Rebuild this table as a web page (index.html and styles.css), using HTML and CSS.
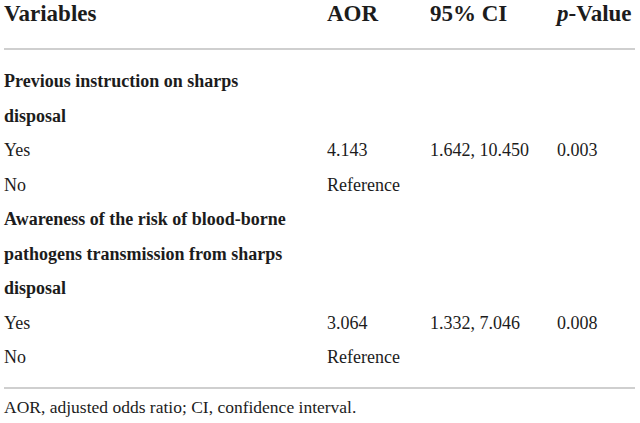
FILE: index.html
```html
<!DOCTYPE html>
<html lang="en">
<head>
    <meta charset="UTF-8">
    <title>Multivariable analysis</title>
    <link rel="stylesheet" href="styles.css">
</head>
<body>

    <table class="results">
        <thead>
            <tr>
                <th class="col-var">Variables</th>
                <th class="col-aor">AOR</th>
                <th class="col-ci">95% CI</th>
                <th class="col-p"><i>p</i>-Value</th>
            </tr>
        </thead>
        <tbody>
            <tr class="first">
                <td class="group">Previous instruction on sharps<br>disposal</td>
                <td></td><td></td><td></td>
            </tr>
            <tr>
                <td>Yes</td>
                <td>4.143</td>
                <td>1.642, 10.450</td>
                <td>0.003</td>
            </tr>
            <tr>
                <td>No</td>
                <td>Reference</td>
                <td></td><td></td>
            </tr>
            <tr>
                <td class="group">Awareness of the risk of blood-borne<br>pathogens transmission from sharps<br>disposal</td>
                <td></td><td></td><td></td>
            </tr>
            <tr>
                <td>Yes</td>
                <td>3.064</td>
                <td>1.332, 7.046</td>
                <td>0.008</td>
            </tr>
            <tr class="last">
                <td>No</td>
                <td>Reference</td>
                <td></td><td></td>
            </tr>
        </tbody>
    </table>

    <p class="note">AOR, adjusted odds ratio; CI, confidence interval.</p>

</body>
</html>
```

FILE: styles.css
```css
body {
    margin: 0;
    padding: 0 5px 0 4px;
    background: #fff;
    color: #1c1c1c;
    font-family: "Liberation Serif", "Times New Roman", serif;
}
.results {
    width: 631px;
    border-collapse: collapse;
    table-layout: fixed;
}
th, td {
    padding: 0;
    text-align: left;
    vertical-align: top;
    white-space: nowrap;
}
th {
    font-size: 23px;
    line-height: 28px;
    padding-bottom: 20px;
    border-bottom: 2px solid #cfcfcf;
}
.col-var { width: 323px; }
.col-aor { width: 103px; }
.col-ci { width: 127px; }
td {
    font-size: 18px;
    line-height: 34.5px;
}
tr.first td { padding-top: 14px; }
tr.last td { padding-bottom: 12px; }
td.group {
    font-weight: bold;
}
tbody tr.last td { border-bottom: 2px solid #cfcfcf; }
.note {
    margin: 4px 0 0;
    font-size: 17.5px;
    line-height: 28px;
}
```
